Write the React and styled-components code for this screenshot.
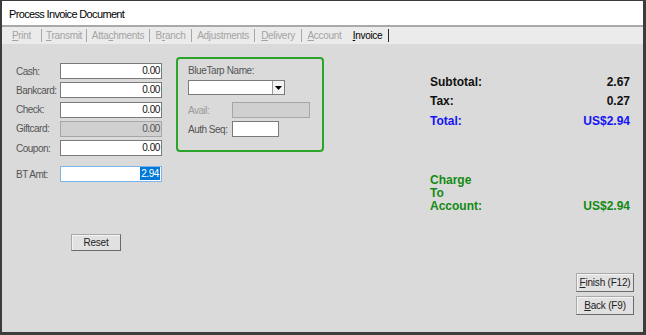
import React from "react";
import styled, { createGlobalStyle } from "styled-components";

const Global = createGlobalStyle`
  html, body { margin: 0; padding: 0; background: #dadada; }
  body { font-family: "Liberation Sans", Arial, sans-serif; }
  *, *::before, *::after { box-sizing: border-box; }
`;

const Window = styled.div`
  width: 646px;
  height: 335px;
  border-style: solid;
  border-color: #3c3c3c;
  border-width: 1px 3px 3px 2px;
  display: flex;
  flex-direction: column;
  background: #dadada;
  overflow: hidden;
`;

const TitleBar = styled.div`
  height: 26px;
  flex: none;
  background: #fff;
  border-bottom: 2px solid #a9a9a9;
  display: flex;
  align-items: center;
  padding: 2px 0 0 7px;
  font-size: 11px;
  letter-spacing: -0.65px;
  color: #000;
`;

const TabStrip = styled.div`
  height: 17px;
  flex: none;
  background: #ebebeb;
  display: flex;
  align-items: center;
`;

const Tab = styled.div`
  width: ${(p) => p.$w}px;
  text-align: center;
  font-size: 10px;
  letter-spacing: -0.3px;
  color: ${(p) => (p.$active ? "#000" : "#a3a3a3")};
  white-space: nowrap;
  u { text-decoration-thickness: 1px; text-underline-offset: 1px; }
`;

const Sep = styled.div`
  width: 1px;
  height: 13px;
  flex: none;
  background: ${(p) => (p.$dark ? "#2a2a2a" : "#a8a8a8")};
`;

const Content = styled.div`
  flex: 1;
  display: flex;
  padding-left: 14px;
  padding-right: 9px;
`;

const LeftCol = styled.div`
  width: 146px;
  flex: none;
  display: flex;
  flex-direction: column;
  padding-top: 19px;
`;

const FieldRow = styled.div`
  display: flex;
  align-items: center;
  justify-content: space-between;
  height: 16px;
  margin-top: ${(p) => p.$mt ?? 0}px;
`;

const Label = styled.span`
  font-size: 10px;
  letter-spacing: -0.5px;
  color: ${(p) => (p.$disabled ? "#9a9a9a" : "#555")};
  white-space: nowrap;
`;

const TextBox = styled.div`
  width: ${(p) => p.$w ?? 102}px;
  height: 16px;
  flex: none;
  border: 1px solid ${(p) => (p.$focus ? "#7db4ea" : p.$disabled ? "#a6a6a6" : "#7a7a7a")};
  background: ${(p) => (p.$disabled ? "#d0d0d0" : "#fff")};
  font-size: 10px;
  letter-spacing: -0.4px;
  line-height: 14px;
  text-align: right;
  padding: 0 1px 0 2px;
  color: ${(p) => (p.$disabled ? "#555" : "#111")};
`;

const Selected = styled.span`
  background: #0078d7;
  color: #fff;
  display: inline-block;
  line-height: 13px;
  padding: 0 1px;
`;

const WinButton = styled.div`
  width: ${(p) => p.$w}px;
  height: ${(p) => p.$h ?? 19}px;
  border: 1px solid;
  border-color: #a9a9a9 #6a6a6a #6a6a6a #a9a9a9;
  box-shadow: inset 1px 1px 0 #f4f4f4;
  background: #e1e1e1;
  display: flex;
  align-items: center;
  justify-content: center;
  font-size: 10px;
  letter-spacing: -0.2px;
  color: #222;
  margin-top: ${(p) => p.$mt ?? 0}px;
  margin-left: ${(p) => p.$ml ?? 0}px;
  u { text-underline-offset: 1px; }
`;

const GroupBox = styled.div`
  width: 148px;
  height: 95px;
  flex: none;
  margin: 13px 0 0 14px;
  border: 2px solid #2aa52a;
  border-radius: 4px;
  padding: 6px 0 0 10px;
  display: flex;
  flex-direction: column;
`;

const GroupLabel = styled.div`
  height: 12px;
  line-height: 12px;
  font-size: 10px;
  letter-spacing: -0.4px;
  color: #555;
`;

const Combo = styled.div`
  width: 97px;
  height: 15px;
  margin-top: 3px;
  border: 1px solid #7a7a7a;
  background: #fff;
  display: flex;
  justify-content: flex-end;
`;

const ComboButton = styled.div`
  width: 12px;
  border-left: 1px solid #9a9a9a;
  background: #f3f3f3;
  display: flex;
  align-items: center;
  justify-content: center;
`;

const GroupRow = styled.div`
  display: flex;
  align-items: center;
  height: 16px;
  margin-top: ${(p) => p.$mt}px;
  & > span { width: 44px; }
`;

const RightCol = styled.div`
  flex: 1;
  margin-left: 106px;
  display: flex;
  flex-direction: column;
  padding-top: 28px;
`;

const TotalRow = styled.div`
  display: flex;
  justify-content: space-between;
  align-items: center;
  height: 19.5px;
  padding-right: 4px;
  font-size: 12px;
  font-weight: bold;
  color: ${(p) => p.$color};
`;

const ChargeBlock = styled.div`
  margin-top: 43px;
  display: flex;
  justify-content: space-between;
  align-items: flex-end;
  padding-right: 4px;
  font-size: 12px;
  font-weight: bold;
  line-height: 13px;
  color: #138a13;
`;

const ButtonStack = styled.div`
  margin-top: auto;
  margin-bottom: 17px;
  align-self: flex-end;
  display: flex;
  flex-direction: column;
  gap: 4px;
`;

const tabs = [
  { w: 39, pre: "", u: "P", post: "rint" },
  { w: 44, pre: "", u: "T", post: "ransmit" },
  { w: 62, pre: "Atta", u: "c", post: "hments" },
  { w: 41, pre: "B", u: "r", post: "anch" },
  { w: 62, pre: "Ad", u: "j", post: "ustments" },
  { w: 46, pre: "", u: "D", post: "elivery" },
  { w: 45, pre: "", u: "A", post: "ccount", noSep: true },
  { w: 41, pre: "", u: "I", post: "nvoice", active: true },
];

const fields = [
  { label: "Cash:", value: "0.00" },
  { label: "Bankcard:", value: "0.00" },
  { label: "Check:", value: "0.00" },
  { label: "Giftcard:", value: "0.00", disabled: true },
  { label: "Coupon:", value: "0.00" },
];

export default function App() {
  return (
    <>
      <Global />
      <Window>
        <TitleBar>Process Invoice Document</TitleBar>
        <TabStrip>
          {tabs.map((t) => (
            <React.Fragment key={t.u + t.post}>
              <Tab $w={t.w} $active={t.active}>
                {t.pre}
                <u>{t.u}</u>
                {t.post}
              </Tab>
              {!t.noSep && <Sep $dark={t.active} />}
            </React.Fragment>
          ))}
        </TabStrip>
        <Content>
          <LeftCol>
            {fields.map((f, i) => (
              <FieldRow key={f.label} $mt={i === 0 ? 0 : 3.25}>
                <Label>{f.label}</Label>
                <TextBox $disabled={f.disabled}>{f.value}</TextBox>
              </FieldRow>
            ))}
            <FieldRow $mt={10}>
              <Label>BT Amt:</Label>
              <TextBox $focus>
                <Selected>2.94</Selected>
              </TextBox>
            </FieldRow>
            <WinButton $w={50} $h={17} $mt={52} $ml={55}>
              Reset
            </WinButton>
          </LeftCol>

          <GroupBox>
            <GroupLabel>BlueTarp Name:</GroupLabel>
            <Combo>
              <ComboButton>
                <svg width="7" height="4" viewBox="0 0 7 4">
                  <path d="M0 0H7L3.5 4Z" fill="#000" />
                </svg>
              </ComboButton>
            </Combo>
            <GroupRow $mt={7}>
              <Label $disabled>Avail:</Label>
              <TextBox $w={78} $disabled />
            </GroupRow>
            <GroupRow $mt={3}>
              <Label>Auth Seq:</Label>
              <TextBox $w={47} />
            </GroupRow>
          </GroupBox>

          <RightCol>
            <TotalRow $color="#111">
              <span>Subtotal:</span>
              <span>2.67</span>
            </TotalRow>
            <TotalRow $color="#111">
              <span>Tax:</span>
              <span>0.27</span>
            </TotalRow>
            <TotalRow $color="#1414f5">
              <span>Total:</span>
              <span>US$2.94</span>
            </TotalRow>
            <ChargeBlock>
              <div>
                Charge
                <br />
                To
                <br />
                Account:
              </div>
              <span>US$2.94</span>
            </ChargeBlock>
            <ButtonStack>
              <WinButton $w={58}>
                <span>
                  <u>F</u>inish (F12)
                </span>
              </WinButton>
              <WinButton $w={58}>
                <span>
                  <u>B</u>ack (F9)
                </span>
              </WinButton>
            </ButtonStack>
          </RightCol>
        </Content>
      </Window>
    </>
  );
}
